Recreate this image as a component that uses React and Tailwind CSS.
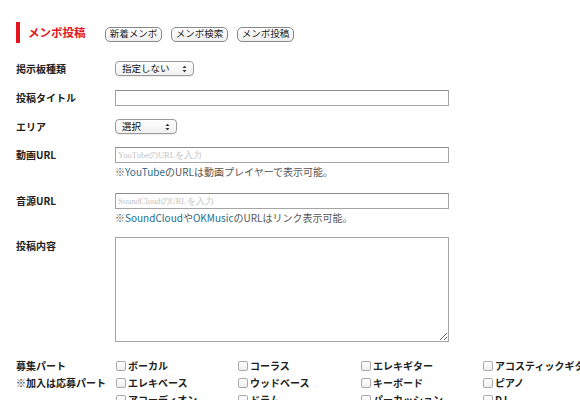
import React from 'react'

const font = { fontFamily: '"Noto Sans CJK JP", "Noto Sans", sans-serif' }

const Label = ({ children, className = '' }) => (
  <div className={`w-[99px] shrink-0 text-[10px] font-bold text-[#222] leading-[15px] ${className}`}>{children}</div>
)

const FakeSelect = ({ text, width }) => (
  <div className={`${width} h-[15px] flex items-center justify-between pl-[6px] pr-[6px] border border-[#9a9a9a] rounded-[4px] bg-gradient-to-b from-white to-[#f0f0f0] shadow-[0_1px_1px_rgba(0,0,0,0.08)]`}>
    <span className="text-[9.5px] leading-none text-[#111]">{text}</span>
    <svg width="5" height="8" viewBox="0 0 5 8">
      <path d="M0.5 3 L2.5 0.8 L4.5 3 Z" fill="#333" />
      <path d="M0.5 5 L2.5 7.2 L4.5 5 Z" fill="#333" />
    </svg>
  </div>
)

const TextBox = ({ placeholder }) => (
  <div className="w-[334px] h-[16px] border border-[#a5a5a5] border-t-[#8c8c8c] bg-white flex items-center px-[2px]">
    {placeholder && (
      <span className="text-[8.5px] leading-none text-[#c4c4c4]" style={{ fontFamily: '"Liberation Serif", serif' }}>{placeholder}</span>
    )}
  </div>
)

const NavButton = ({ children }) => (
  <div className="h-[15px] w-[57px] flex items-center justify-center border border-[#888] rounded-[5px] bg-gradient-to-b from-white to-[#efefef] text-[9.5px] leading-none text-[#222]">
    {children}
  </div>
)

const Check = ({ label }) => (
  <div className="flex items-center gap-[2px] h-[17px]">
    <span className="w-[10px] h-[10px] border border-[#aaa] rounded-[2px] bg-gradient-to-b from-white to-[#eee]" />
    <span className="text-[10px] font-semibold text-[#222] leading-none whitespace-nowrap">{label}</span>
  </div>
)

const parts = [
  ['ボーカル', 'コーラス', 'エレキギター', 'アコスティックギター'],
  ['エレキベース', 'ウッドベース', 'キーボード', 'ピアノ'],
  ['アコーディオン', 'ドラム', 'パーカッション', 'DJ'],
]

export default function App() {
  return (
    <div className="w-[580px] h-[400px] overflow-hidden bg-white" style={font}>
      <div className="pl-[16px] pt-[22px]">
        <div className="flex items-center h-[21px]">
          <div className="w-[4px] h-[21px] bg-[#e3141d]" />
          <div className="ml-[8px] w-[77px] text-[11.5px] font-bold text-[#e3141d] leading-none whitespace-nowrap">メンボ投稿</div>
          <div className="flex gap-[9px] mt-[3px]">
            <NavButton>新着メンボ</NavButton>
            <NavButton>メンボ検索</NavButton>
            <NavButton>メンボ投稿</NavButton>
          </div>
        </div>

        <div className="flex mt-[18px]">
          <Label>掲示板種類</Label>
          <FakeSelect text="指定しない" width="w-[79px]" />
        </div>

        <div className="flex mt-[14px]">
          <Label>投稿タイトル</Label>
          <TextBox />
        </div>

        <div className="flex mt-[13px]">
          <Label>エリア</Label>
          <FakeSelect text="選択" width="w-[62px]" />
        </div>

        <div className="flex mt-[13px]">
          <Label>動画URL</Label>
          <div>
            <TextBox placeholder="YouTubeのURLを入力" />
            <div className="text-[10px] leading-[16px] text-[#555] mt-[1px]">
              ※<span className="text-[#1d6e8c]">YouTube</span>のURLは動画プレイヤーで表示可能。
            </div>
          </div>
        </div>

        <div className="flex mt-[13px]">
          <Label>音源URL</Label>
          <div>
            <TextBox placeholder="SoundCloudのURLを入力" />
            <div className="text-[10px] leading-[16px] text-[#555] mt-[1px]">
              ※<span className="text-[#1d6e8c]">SoundCloud</span>や<span className="text-[#1d6e8c]">OKMusic</span>のURLはリンク表示可能。
            </div>
          </div>
        </div>

        <div className="flex mt-[11px]">
          <Label className="mt-[1px]">投稿内容</Label>
          <textarea className="w-[334px] h-[105px] border border-[#a5a5a5] bg-white resize block" />
        </div>

        <div className="flex mt-[15px]">
          <div className="w-[100px] shrink-0">
            <div className="text-[10px] font-bold text-[#222] leading-[17px]">募集パート</div>
            <div className="text-[10px] font-semibold text-[#222] leading-[17px] whitespace-nowrap">※加入は応募パート</div>
          </div>
          <div className="grid grid-cols-[122px_123px_122px_200px]">
            {parts.flat().map((p) => (
              <Check key={p} label={p} />
            ))}
          </div>
        </div>
      </div>
    </div>
  )
}
